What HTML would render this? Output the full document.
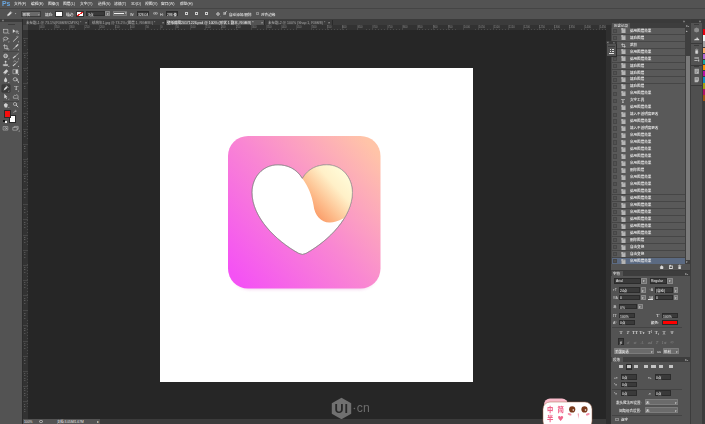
<!DOCTYPE html><html lang="zh"><head><meta charset="utf-8"><title>Photoshop</title><style>
*{margin:0;padding:0;box-sizing:border-box}
html,body{width:705px;height:424px;overflow:hidden;background:#262626}
body{position:relative;font-family:"Liberation Sans","Noto Sans CJK SC",sans-serif;color:#e6e6e6}
.a{position:absolute}
.t{position:absolute;white-space:nowrap;line-height:1;font-size:14.8px;color:#e8e8e8;transform:scale(.25);transform-origin:0 0;font-weight:500}
.f{position:absolute;background:#3a3a3a;border:0.5px solid #2c2c2c}
.dd{position:absolute;background:#606060;border:0.5px solid #3a3a3a}
</style></head><body>
<div class="a" style="left:28px;top:30px;width:578px;height:389px;background:#262626;"></div>
<div class="a" style="left:160px;top:68px;width:313px;height:313.5px;background:#ffffff;"></div>
<svg class="a" style="left:218px;top:126px" width="173" height="173" viewBox="218 126 173 173">
<defs>
<linearGradient id="g1" x1="0" y1="0.93" x2="1" y2="0.07"><stop offset="0.03" stop-color="#f452f4"/><stop offset="0.5" stop-color="#f987d2"/><stop offset="0.97" stop-color="#ffc4a8"/></linearGradient>
<linearGradient id="g2" x1="0.1" y1="0.9" x2="0.8" y2="0.2"><stop offset="0" stop-color="#f98a55"/><stop offset="0.35" stop-color="#fdbb8a"/><stop offset="0.72" stop-color="#fff0c8"/><stop offset="1" stop-color="#fffbd8"/></linearGradient>
<filter id="sh" x="-10%" y="-10%" width="120%" height="125%"><feGaussianBlur stdDeviation="1.6"/></filter>
<clipPath id="hc"><path id="hp" d="M302.4 178.4 C296.5 168.5 287 164.8 278 164.8 C262.5 164.8 252 177.5 252 192.5 C252 217 275.5 240.5 298.6 253.3 Q302.4 255.6 306.2 253.3 C329 240.5 352.4 217 352.4 192.5 C352.4 177.5 342 164.8 326.8 164.8 C317.5 164.8 308 168.5 302.4 178.4 Z"/></clipPath>
</defs>
<rect x="231" y="141" width="147" height="149" rx="19" fill="#e9a8dc" opacity="0.4" filter="url(#sh)"/>
<rect x="228" y="136" width="152.5" height="152.5" rx="20" fill="url(#g1)"/>
<path d="M302.4 178.4 C296.5 168.5 287 164.8 278 164.8 C262.5 164.8 252 177.5 252 192.5 C252 217 275.5 240.5 298.6 253.3 Q302.4 255.6 306.2 253.3 C329 240.5 352.4 217 352.4 192.5 C352.4 177.5 342 164.8 326.8 164.8 C317.5 164.8 308 168.5 302.4 178.4 Z" fill="#fff" stroke="#8c8488" stroke-width="0.6"/>
<g clip-path="url(#hc)"><path d="M302.4 178.6 C308 186 312 196 313.5 205 C314.5 216 322 223 330 222.5 C338 222 346 218 352 212 L356 160 L300 160 Z" fill="url(#g2)"/></g>
<path d="M302.4 178.4 C296.5 168.5 287 164.8 278 164.8 C262.5 164.8 252 177.5 252 192.5 C252 217 275.5 240.5 298.6 253.3 Q302.4 255.6 306.2 253.3 C329 240.5 352.4 217 352.4 192.5 C352.4 177.5 342 164.8 326.8 164.8 C317.5 164.8 308 168.5 302.4 178.4 Z" fill="none" stroke="#8c8488" stroke-width="0.6"/>
</svg>
<svg class="a" style="left:328px;top:395px;will-change:transform" width="48" height="26" viewBox="328 395 48 26">
<polygon points="341.5,397.8 351.2,403.2 351.2,413.8 341.5,419.2 331.8,413.8 331.8,403.2" fill="#707070"/>
<text x="341.6" y="412.5" font-size="12.6" font-weight="bold" text-anchor="middle" fill="#282828" font-family="Liberation Sans, sans-serif" letter-spacing="0.8">UI</text>
<circle cx="354.4" cy="408.5" r="0.8" fill="#6a6a6a"/>
<text x="356.8" y="411.9" font-size="12.2" fill="#6c6c6c" font-family="Liberation Sans, sans-serif" letter-spacing="0.2">cn</text>
</svg>
<div class="a" style="left:0px;top:0px;width:705px;height:8.3px;background:#535353;"></div>
<div class="t" style="left:2px;top:0.35px;font-size:27.2px;color:#6aa6de;font-weight:bold;letter-spacing:-0.2px">Ps</div>
<div class="t" style="left:14px;top:2.45px;font-size:15.0px;color:#e8e8e8;">文件(F)</div>
<div class="t" style="left:31px;top:2.45px;font-size:15.0px;color:#e8e8e8;">编辑(E)</div>
<div class="t" style="left:47.5px;top:2.45px;font-size:15.0px;color:#e8e8e8;">图像(I)</div>
<div class="t" style="left:63px;top:2.45px;font-size:15.0px;color:#e8e8e8;">图层(L)</div>
<div class="t" style="left:80px;top:2.45px;font-size:15.0px;color:#e8e8e8;">文字(Y)</div>
<div class="t" style="left:97.5px;top:2.45px;font-size:15.0px;color:#e8e8e8;">选择(S)</div>
<div class="t" style="left:113.6px;top:2.45px;font-size:15.0px;color:#e8e8e8;">滤镜(T)</div>
<div class="t" style="left:130.7px;top:2.45px;font-size:15.0px;color:#e8e8e8;">3D(D)</div>
<div class="t" style="left:144.5px;top:2.45px;font-size:15.0px;color:#e8e8e8;">视图(V)</div>
<div class="t" style="left:161px;top:2.45px;font-size:15.0px;color:#e8e8e8;">窗口(W)</div>
<div class="t" style="left:180px;top:2.45px;font-size:15.0px;color:#e8e8e8;">帮助(H)</div>
<div class="a" style="left:0px;top:8.1px;width:705px;height:11.2px;background:#535353;border-top:0.5px solid #454545"></div>
<svg class="a" style="left:6px;top:10px" width="12" height="8" viewBox="0 0 12 8"><path d="M1.2 6.2 L1.8 4.2 L4.2 1.8 L5.6 3.2 L3.2 5.6 Z" fill="#d8d8d8"/><path d="M4.6 1.4 L6 2.8" stroke="#d8d8d8" stroke-width="0.7"/><path d="M8.9 3.2 L10.3 3.2 L9.6 4.2 Z" fill="#d0d0d0"/></svg>
<div class="a" style="left:20.9px;top:10.9px;width:20px;height:5.8px;background:#6a6a6a;border:0.4px solid #3c3c3c;border-radius:0.5px"></div>
<div class="t" style="left:23px;top:12.55px;font-size:14.4px;color:#e8e8e8;">形状</div>
<div class="t" style="left:38px;top:12.75px;font-size:12px;color:#ddd;">÷</div>
<div class="t" style="left:45px;top:12.55px;font-size:14.4px;color:#e8e8e8;">填充:</div>
<div class="a" style="left:55px;top:11px;width:8px;height:5.6px;background:#ffffff;border:0.5px solid #333"></div>
<div class="t" style="left:66px;top:12.55px;font-size:14.4px;color:#e8e8e8;">描边:</div>
<div class="a" style="left:76px;top:11px;width:8px;height:5.6px;background:#ffffff;border:0.5px solid #333;background:linear-gradient(to bottom right,#fff 42%,#e22 42%,#e22 58%,#fff 58%)"></div>
<div class="a" style="left:86.2px;top:10.8px;width:19px;height:5.4px;background:#3a3a3a;border:0.4px solid #2c2c2c"></div>
<div class="t" style="left:88px;top:12.55px;font-size:14.4px;color:#e8e8e8;">3点</div>
<div class="a" style="left:105.4px;top:10.8px;width:4.7px;height:5.4px;background:#6e6e6e;border:0.4px solid #8a8a8a;border-radius:0.5px"></div>
<div class="t" style="left:106.7px;top:12.05px;font-size:12px;color:#e8e8e8;">▾</div>
<div class="a" style="left:112.8px;top:10.8px;width:14px;height:5.4px;background:#626262;border:0.4px solid #7a7a7a;border-radius:0.5px"></div>
<div class="a" style="left:114.4px;top:13px;width:10px;height:0.9px;background:#f0f0f0;"></div>
<div class="t" style="left:124.8px;top:12.25px;font-size:10.4px;color:#ddd;">▾</div>
<div class="t" style="left:130.4px;top:12.55px;font-size:14.4px;color:#e8e8e8;">W:</div>
<div class="a" style="left:137px;top:10.9px;width:12.2px;height:5.2px;background:#3a3a3a;border:0.4px solid #2c2c2c"></div>
<div class="t" style="left:138px;top:12.55px;font-size:13.6px;color:#f4f4f4;">326.04</div>
<svg class="a" style="left:152.6px;top:12.4px" width="5" height="3" viewBox="0 0 5 3" fill="none" stroke="#c8c8c8" stroke-width="0.6"><rect x="0.3" y="0.6" width="2.4" height="1.6" rx="0.8"/><rect x="2.2" y="0.6" width="2.4" height="1.6" rx="0.8"/></svg>
<div class="t" style="left:160.3px;top:12.55px;font-size:14.4px;color:#e8e8e8;">H:</div>
<div class="a" style="left:165.5px;top:10.9px;width:12.2px;height:5.2px;background:#3a3a3a;border:0.4px solid #2c2c2c"></div>
<div class="t" style="left:166.5px;top:12.55px;font-size:13.6px;color:#f4f4f4;">286 像</div>
<div class="a" style="left:185px;top:11.6px;width:3px;height:3.6px;background:transparent;border:0.6px solid #ccc"></div>
<div class="a" style="left:195px;top:11.6px;width:3px;height:3.6px;background:transparent;border:0.6px solid #ccc"></div>
<div class="a" style="left:205px;top:11.6px;width:3px;height:3.6px;background:transparent;border:0.6px solid #ccc"></div>
<svg class="a" style="left:214.5px;top:11px" width="6" height="6" viewBox="0 0 6 6"><circle cx="3" cy="3" r="1.25" fill="none" stroke="#ddd" stroke-width="0.9"/><path d="M5 5 l0.9 0 l-0.45 0.6z" fill="#ccc"/></svg>
<div class="a" style="left:223.3px;top:12px;width:3.2px;height:3.2px;background:#5e5e5e;border:0.4px solid #8a8a8a"></div>
<div class="t" style="left:223.7px;top:11.15px;font-size:16px;color:#f4f4f4;">✓</div>
<div class="t" style="left:229px;top:12.55px;font-size:14.4px;color:#e8e8e8;">自动添加/删除</div>
<div class="a" style="left:255.6px;top:12px;width:3.2px;height:3.2px;background:#5e5e5e;border:0.4px solid #8a8a8a"></div>
<div class="t" style="left:261px;top:12.55px;font-size:14.4px;color:#e8e8e8;">对齐边缘</div>
<div class="a" style="left:0px;top:19.3px;width:611px;height:5.7px;background:#3b3b3b;"></div>
<div class="a" style="left:165.3px;top:19.6px;width:98.7px;height:5.4px;background:#535353;"></div>
<div class="t" style="left:26px;top:21.05px;font-size:14.0px;color:#aaa;">未标题-1 @ 73.1%(RGB/8/CMYK) *</div>
<div class="t" style="left:92px;top:21.05px;font-size:14.0px;color:#aaa;">结构年1.jpg @ 73.2% (图层 1, RGB/8#) *</div>
<div class="t" style="left:167px;top:21.05px;font-size:14.0px;color:#eee;">壁纸截图20171226.psd @ 100% (形状 1 副本, RGB/8) *</div>
<div class="t" style="left:268px;top:21.05px;font-size:14.0px;color:#aaa;">未标题-2 @ 100% (Shap 1, RGB/8) *</div>
<div class="t" style="left:85px;top:20.85px;font-size:15.2px;color:#ccc;">×</div>
<div class="t" style="left:161.5px;top:20.85px;font-size:15.2px;color:#ccc;">×</div>
<div class="t" style="left:260.5px;top:20.85px;font-size:15.2px;color:#ccc;">×</div>
<div class="t" style="left:328px;top:20.85px;font-size:15.2px;color:#ccc;">×</div>
<div class="a" style="left:87.7px;top:19.6px;width:0.5px;height:5.4px;background:#2a2a2a;"></div>
<div class="a" style="left:165px;top:19.6px;width:0.5px;height:5.4px;background:#2a2a2a;"></div>
<div class="a" style="left:264px;top:19.6px;width:0.5px;height:5.4px;background:#2a2a2a;"></div>
<div class="a" style="left:332px;top:19.6px;width:0.5px;height:5.4px;background:#2a2a2a;"></div>
<div class="a" style="left:23px;top:25px;width:583px;height:5.2px;background:#323232;background-image:repeating-linear-gradient(to right,#4a4a4a 0,#4a4a4a 0.35px,transparent 0.35px,transparent 1.514px);background-size:100% 1.2px;background-repeat:no-repeat;background-position:0.9px 4px"></div>
<div class="a" style="left:23px;top:30.2px;width:4.8px;height:389px;background:#323232;background-image:repeating-linear-gradient(to bottom,#4a4a4a 0,#4a4a4a 0.35px,transparent 0.35px,transparent 1.514px);background-size:1.2px 100%;background-repeat:no-repeat;background-position:3.6px 1.3px"></div>
<div class="a" style="left:23px;top:25px;width:4.8px;height:5.2px;background:#474747;"></div>
<div class="a" style="left:38.88px;top:25.3px;width:0.4px;height:4.9px;background:#464646;"></div>
<div class="t" style="left:39.58px;top:25.75px;font-size:10.8px;color:#8c8c8c;">400</div>
<div class="a" style="left:54.02px;top:25.3px;width:0.4px;height:4.9px;background:#464646;"></div>
<div class="t" style="left:54.72px;top:25.75px;font-size:10.8px;color:#8c8c8c;">350</div>
<div class="a" style="left:69.16px;top:25.3px;width:0.4px;height:4.9px;background:#464646;"></div>
<div class="t" style="left:69.86px;top:25.75px;font-size:10.8px;color:#8c8c8c;">300</div>
<div class="a" style="left:84.3px;top:25.3px;width:0.4px;height:4.9px;background:#464646;"></div>
<div class="t" style="left:85.0px;top:25.75px;font-size:10.8px;color:#8c8c8c;">250</div>
<div class="a" style="left:99.44px;top:25.3px;width:0.4px;height:4.9px;background:#464646;"></div>
<div class="t" style="left:100.14px;top:25.75px;font-size:10.8px;color:#8c8c8c;">200</div>
<div class="a" style="left:114.58px;top:25.3px;width:0.4px;height:4.9px;background:#464646;"></div>
<div class="t" style="left:115.28px;top:25.75px;font-size:10.8px;color:#8c8c8c;">150</div>
<div class="a" style="left:129.72px;top:25.3px;width:0.4px;height:4.9px;background:#464646;"></div>
<div class="t" style="left:130.42px;top:25.75px;font-size:10.8px;color:#8c8c8c;">100</div>
<div class="a" style="left:144.86px;top:25.3px;width:0.4px;height:4.9px;background:#464646;"></div>
<div class="t" style="left:145.56px;top:25.75px;font-size:10.8px;color:#8c8c8c;">50</div>
<div class="a" style="left:160.0px;top:25.3px;width:0.4px;height:4.9px;background:#464646;"></div>
<div class="t" style="left:160.7px;top:25.75px;font-size:10.8px;color:#8c8c8c;">0</div>
<div class="a" style="left:175.14px;top:25.3px;width:0.4px;height:4.9px;background:#464646;"></div>
<div class="t" style="left:175.84px;top:25.75px;font-size:10.8px;color:#8c8c8c;">50</div>
<div class="a" style="left:190.28px;top:25.3px;width:0.4px;height:4.9px;background:#464646;"></div>
<div class="t" style="left:190.98px;top:25.75px;font-size:10.8px;color:#8c8c8c;">100</div>
<div class="a" style="left:205.42px;top:25.3px;width:0.4px;height:4.9px;background:#464646;"></div>
<div class="t" style="left:206.12px;top:25.75px;font-size:10.8px;color:#8c8c8c;">150</div>
<div class="a" style="left:220.56px;top:25.3px;width:0.4px;height:4.9px;background:#464646;"></div>
<div class="t" style="left:221.26px;top:25.75px;font-size:10.8px;color:#8c8c8c;">200</div>
<div class="a" style="left:235.7px;top:25.3px;width:0.4px;height:4.9px;background:#464646;"></div>
<div class="t" style="left:236.4px;top:25.75px;font-size:10.8px;color:#8c8c8c;">250</div>
<div class="a" style="left:250.84px;top:25.3px;width:0.4px;height:4.9px;background:#464646;"></div>
<div class="t" style="left:251.54px;top:25.75px;font-size:10.8px;color:#8c8c8c;">300</div>
<div class="a" style="left:265.98px;top:25.3px;width:0.4px;height:4.9px;background:#464646;"></div>
<div class="t" style="left:266.68px;top:25.75px;font-size:10.8px;color:#8c8c8c;">350</div>
<div class="a" style="left:281.12px;top:25.3px;width:0.4px;height:4.9px;background:#464646;"></div>
<div class="t" style="left:281.82px;top:25.75px;font-size:10.8px;color:#8c8c8c;">400</div>
<div class="a" style="left:296.26px;top:25.3px;width:0.4px;height:4.9px;background:#464646;"></div>
<div class="t" style="left:296.96px;top:25.75px;font-size:10.8px;color:#8c8c8c;">450</div>
<div class="a" style="left:311.4px;top:25.3px;width:0.4px;height:4.9px;background:#464646;"></div>
<div class="t" style="left:312.1px;top:25.75px;font-size:10.8px;color:#8c8c8c;">500</div>
<div class="a" style="left:326.54px;top:25.3px;width:0.4px;height:4.9px;background:#464646;"></div>
<div class="t" style="left:327.24px;top:25.75px;font-size:10.8px;color:#8c8c8c;">550</div>
<div class="a" style="left:341.68px;top:25.3px;width:0.4px;height:4.9px;background:#464646;"></div>
<div class="t" style="left:342.38px;top:25.75px;font-size:10.8px;color:#8c8c8c;">600</div>
<div class="a" style="left:356.82px;top:25.3px;width:0.4px;height:4.9px;background:#464646;"></div>
<div class="t" style="left:357.52px;top:25.75px;font-size:10.8px;color:#8c8c8c;">650</div>
<div class="a" style="left:371.96px;top:25.3px;width:0.4px;height:4.9px;background:#464646;"></div>
<div class="t" style="left:372.66px;top:25.75px;font-size:10.8px;color:#8c8c8c;">700</div>
<div class="a" style="left:387.1px;top:25.3px;width:0.4px;height:4.9px;background:#464646;"></div>
<div class="t" style="left:387.8px;top:25.75px;font-size:10.8px;color:#8c8c8c;">750</div>
<div class="a" style="left:402.24px;top:25.3px;width:0.4px;height:4.9px;background:#464646;"></div>
<div class="t" style="left:402.94px;top:25.75px;font-size:10.8px;color:#8c8c8c;">800</div>
<div class="a" style="left:417.38px;top:25.3px;width:0.4px;height:4.9px;background:#464646;"></div>
<div class="t" style="left:418.08px;top:25.75px;font-size:10.8px;color:#8c8c8c;">850</div>
<div class="a" style="left:432.52px;top:25.3px;width:0.4px;height:4.9px;background:#464646;"></div>
<div class="t" style="left:433.22px;top:25.75px;font-size:10.8px;color:#8c8c8c;">900</div>
<div class="a" style="left:447.66px;top:25.3px;width:0.4px;height:4.9px;background:#464646;"></div>
<div class="t" style="left:448.36px;top:25.75px;font-size:10.8px;color:#8c8c8c;">950</div>
<div class="a" style="left:462.8px;top:25.3px;width:0.4px;height:4.9px;background:#464646;"></div>
<div class="t" style="left:463.5px;top:25.75px;font-size:10.8px;color:#8c8c8c;">1000</div>
<div class="a" style="left:477.94px;top:25.3px;width:0.4px;height:4.9px;background:#464646;"></div>
<div class="t" style="left:478.64px;top:25.75px;font-size:10.8px;color:#8c8c8c;">1050</div>
<div class="a" style="left:493.08px;top:25.3px;width:0.4px;height:4.9px;background:#464646;"></div>
<div class="t" style="left:493.78px;top:25.75px;font-size:10.8px;color:#8c8c8c;">1100</div>
<div class="a" style="left:508.22px;top:25.3px;width:0.4px;height:4.9px;background:#464646;"></div>
<div class="t" style="left:508.92px;top:25.75px;font-size:10.8px;color:#8c8c8c;">1150</div>
<div class="a" style="left:523.36px;top:25.3px;width:0.4px;height:4.9px;background:#464646;"></div>
<div class="t" style="left:524.06px;top:25.75px;font-size:10.8px;color:#8c8c8c;">1200</div>
<div class="a" style="left:538.5px;top:25.3px;width:0.4px;height:4.9px;background:#464646;"></div>
<div class="t" style="left:539.2px;top:25.75px;font-size:10.8px;color:#8c8c8c;">1250</div>
<div class="a" style="left:553.64px;top:25.3px;width:0.4px;height:4.9px;background:#464646;"></div>
<div class="t" style="left:554.34px;top:25.75px;font-size:10.8px;color:#8c8c8c;">1300</div>
<div class="a" style="left:568.78px;top:25.3px;width:0.4px;height:4.9px;background:#464646;"></div>
<div class="t" style="left:569.48px;top:25.75px;font-size:10.8px;color:#8c8c8c;">1350</div>
<div class="a" style="left:583.92px;top:25.3px;width:0.4px;height:4.9px;background:#464646;"></div>
<div class="t" style="left:584.62px;top:25.75px;font-size:10.8px;color:#8c8c8c;">1400</div>
<div class="a" style="left:599.06px;top:25.3px;width:0.4px;height:4.9px;background:#464646;"></div>
<div class="t" style="left:599.76px;top:25.75px;font-size:10.8px;color:#8c8c8c;">1450</div>
<div class="a" style="left:23.3px;top:37.72px;width:4.5px;height:0.4px;background:#464646;"></div>
<div class="t" style="left:23.7px;top:39.17px;font-size:10.0px;color:#8c8c8c;line-height:0.92;white-space:normal;width:8px">1<br>0<br>0</div>
<div class="a" style="left:23.3px;top:52.86px;width:4.5px;height:0.4px;background:#464646;"></div>
<div class="t" style="left:23.7px;top:54.31px;font-size:10.0px;color:#8c8c8c;line-height:0.92;white-space:normal;width:8px">5<br>0</div>
<div class="a" style="left:23.3px;top:68.0px;width:4.5px;height:0.4px;background:#464646;"></div>
<div class="t" style="left:23.7px;top:69.45px;font-size:10.0px;color:#8c8c8c;line-height:0.92;white-space:normal;width:8px">0</div>
<div class="a" style="left:23.3px;top:83.14px;width:4.5px;height:0.4px;background:#464646;"></div>
<div class="t" style="left:23.7px;top:84.59px;font-size:10.0px;color:#8c8c8c;line-height:0.92;white-space:normal;width:8px">5<br>0</div>
<div class="a" style="left:23.3px;top:98.28px;width:4.5px;height:0.4px;background:#464646;"></div>
<div class="t" style="left:23.7px;top:99.73px;font-size:10.0px;color:#8c8c8c;line-height:0.92;white-space:normal;width:8px">1<br>0<br>0</div>
<div class="a" style="left:23.3px;top:113.42px;width:4.5px;height:0.4px;background:#464646;"></div>
<div class="t" style="left:23.7px;top:114.87px;font-size:10.0px;color:#8c8c8c;line-height:0.92;white-space:normal;width:8px">1<br>5<br>0</div>
<div class="a" style="left:23.3px;top:128.56px;width:4.5px;height:0.4px;background:#464646;"></div>
<div class="t" style="left:23.7px;top:130.01px;font-size:10.0px;color:#8c8c8c;line-height:0.92;white-space:normal;width:8px">2<br>0<br>0</div>
<div class="a" style="left:23.3px;top:143.7px;width:4.5px;height:0.4px;background:#464646;"></div>
<div class="t" style="left:23.7px;top:145.15px;font-size:10.0px;color:#8c8c8c;line-height:0.92;white-space:normal;width:8px">2<br>5<br>0</div>
<div class="a" style="left:23.3px;top:158.84px;width:4.5px;height:0.4px;background:#464646;"></div>
<div class="t" style="left:23.7px;top:160.29px;font-size:10.0px;color:#8c8c8c;line-height:0.92;white-space:normal;width:8px">3<br>0<br>0</div>
<div class="a" style="left:23.3px;top:173.98px;width:4.5px;height:0.4px;background:#464646;"></div>
<div class="t" style="left:23.7px;top:175.43px;font-size:10.0px;color:#8c8c8c;line-height:0.92;white-space:normal;width:8px">3<br>5<br>0</div>
<div class="a" style="left:23.3px;top:189.12px;width:4.5px;height:0.4px;background:#464646;"></div>
<div class="t" style="left:23.7px;top:190.57px;font-size:10.0px;color:#8c8c8c;line-height:0.92;white-space:normal;width:8px">4<br>0<br>0</div>
<div class="a" style="left:23.3px;top:204.26px;width:4.5px;height:0.4px;background:#464646;"></div>
<div class="t" style="left:23.7px;top:205.71px;font-size:10.0px;color:#8c8c8c;line-height:0.92;white-space:normal;width:8px">4<br>5<br>0</div>
<div class="a" style="left:23.3px;top:219.4px;width:4.5px;height:0.4px;background:#464646;"></div>
<div class="t" style="left:23.7px;top:220.85px;font-size:10.0px;color:#8c8c8c;line-height:0.92;white-space:normal;width:8px">5<br>0<br>0</div>
<div class="a" style="left:23.3px;top:234.54px;width:4.5px;height:0.4px;background:#464646;"></div>
<div class="t" style="left:23.7px;top:235.99px;font-size:10.0px;color:#8c8c8c;line-height:0.92;white-space:normal;width:8px">5<br>5<br>0</div>
<div class="a" style="left:23.3px;top:249.68px;width:4.5px;height:0.4px;background:#464646;"></div>
<div class="t" style="left:23.7px;top:251.13px;font-size:10.0px;color:#8c8c8c;line-height:0.92;white-space:normal;width:8px">6<br>0<br>0</div>
<div class="a" style="left:23.3px;top:264.82px;width:4.5px;height:0.4px;background:#464646;"></div>
<div class="t" style="left:23.7px;top:266.27px;font-size:10.0px;color:#8c8c8c;line-height:0.92;white-space:normal;width:8px">6<br>5<br>0</div>
<div class="a" style="left:23.3px;top:279.96px;width:4.5px;height:0.4px;background:#464646;"></div>
<div class="t" style="left:23.7px;top:281.41px;font-size:10.0px;color:#8c8c8c;line-height:0.92;white-space:normal;width:8px">7<br>0<br>0</div>
<div class="a" style="left:23.3px;top:295.1px;width:4.5px;height:0.4px;background:#464646;"></div>
<div class="t" style="left:23.7px;top:296.55px;font-size:10.0px;color:#8c8c8c;line-height:0.92;white-space:normal;width:8px">7<br>5<br>0</div>
<div class="a" style="left:23.3px;top:310.24px;width:4.5px;height:0.4px;background:#464646;"></div>
<div class="t" style="left:23.7px;top:311.69px;font-size:10.0px;color:#8c8c8c;line-height:0.92;white-space:normal;width:8px">8<br>0<br>0</div>
<div class="a" style="left:23.3px;top:325.38px;width:4.5px;height:0.4px;background:#464646;"></div>
<div class="t" style="left:23.7px;top:326.83px;font-size:10.0px;color:#8c8c8c;line-height:0.92;white-space:normal;width:8px">8<br>5<br>0</div>
<div class="a" style="left:23.3px;top:340.52px;width:4.5px;height:0.4px;background:#464646;"></div>
<div class="t" style="left:23.7px;top:341.97px;font-size:10.0px;color:#8c8c8c;line-height:0.92;white-space:normal;width:8px">9<br>0<br>0</div>
<div class="a" style="left:23.3px;top:355.66px;width:4.5px;height:0.4px;background:#464646;"></div>
<div class="t" style="left:23.7px;top:357.11px;font-size:10.0px;color:#8c8c8c;line-height:0.92;white-space:normal;width:8px">9<br>5<br>0</div>
<div class="a" style="left:23.3px;top:370.8px;width:4.5px;height:0.4px;background:#464646;"></div>
<div class="t" style="left:23.7px;top:372.25px;font-size:10.0px;color:#8c8c8c;line-height:0.92;white-space:normal;width:8px">1<br>0<br>0<br>0</div>
<div class="a" style="left:23.3px;top:385.94px;width:4.5px;height:0.4px;background:#464646;"></div>
<div class="t" style="left:23.7px;top:387.39px;font-size:10.0px;color:#8c8c8c;line-height:0.92;white-space:normal;width:8px">1<br>0<br>5<br>0</div>
<div class="a" style="left:23.3px;top:401.08px;width:4.5px;height:0.4px;background:#464646;"></div>
<div class="t" style="left:23.7px;top:402.53px;font-size:10.0px;color:#8c8c8c;line-height:0.92;white-space:normal;width:8px">1<br>1<br>0<br>0</div>
<div class="a" style="left:0px;top:19.3px;width:22px;height:405px;background:#535353;"></div>
<div class="a" style="left:0px;top:19.3px;width:22px;height:2.3px;background:#3c3c3c;"></div>
<div class="t" style="left:1.6px;top:19.25px;font-size:13.6px;color:#ccc;">«</div>
<div class="a" style="left:22px;top:19.3px;width:1.2px;height:405px;background:#2b2b2b;"></div>
<div class="a" style="left:7.5px;top:24.2px;width:7px;height:0.6px;background:#3c3c3c;"></div>
<div class="a" style="left:1.7px;top:84.6px;width:7.9px;height:7.1px;background:#3b3b3b;border-radius:0.8px;box-shadow:0 0 0 0.4px #303030"></div>
<div class="a" style="left:3px;top:51.4px;width:16px;height:0.5px;background:#454545;"></div>
<div class="a" style="left:3px;top:100.7px;width:16px;height:0.5px;background:#454545;"></div>
<svg class="a" style="left:0;top:19px" width="22" height="120" viewBox="0 19 22 120" fill="none" stroke="#cdcdcd" stroke-width="0.62" stroke-linecap="round" stroke-linejoin="round">
<g fill="#cfcfcf" stroke="none">
<path d="M9.2 32.9 v1.2 h-1.2 Z"/><path d="M19.0 32.9 v1.2 h-1.2 Z"/><path d="M9.2 41.1 v1.2 h-1.2 Z"/><path d="M19.0 41.1 v1.2 h-1.2 Z"/><path d="M9.2 49.1 v1.2 h-1.2 Z"/><path d="M19.0 49.1 v1.2 h-1.2 Z"/><path d="M9.2 58.0 v1.2 h-1.2 Z"/><path d="M19.0 58.0 v1.2 h-1.2 Z"/><path d="M9.2 65.7 v1.2 h-1.2 Z"/><path d="M19.0 65.7 v1.2 h-1.2 Z"/><path d="M9.2 73.8 v1.2 h-1.2 Z"/><path d="M19.0 73.8 v1.2 h-1.2 Z"/><path d="M9.2 81.8 v1.2 h-1.2 Z"/><path d="M19.0 81.8 v1.2 h-1.2 Z"/><path d="M9.2 90.2 v1.2 h-1.2 Z"/><path d="M19.0 90.2 v1.2 h-1.2 Z"/><path d="M9.2 98.4 v1.2 h-1.2 Z"/><path d="M19.0 98.4 v1.2 h-1.2 Z"/><path d="M9.2 106.9 v1.2 h-1.2 Z"/><path d="M19.6 130.2 v1.2 h-1.2 Z"/>
</g>
<rect x="3.6" y="29.4" width="4.2" height="3.6" stroke-dasharray="0.9 0.6" stroke-width="0.6"/>
<path d="M12.8 29.2 L12.8 33 L15.4 31.1 Z" fill="#d6d6d6" stroke="none"/><path d="M15.6 31.8 H18.4 M17 30.4 V33.2" stroke-width="0.6"/>
<ellipse cx="5.6" cy="38.6" rx="2.3" ry="1.5"/><path d="M4 39.8 L3.6 41.2"/>
<path d="M13.4 41.3 L17.6 37.2" stroke-width="0.9"/><path d="M17.9 36.2 L18.3 36.9 M16.6 36.6 L17 36.2" stroke-width="0.4"/>
<path d="M4.6 44.6 V48.6 H8.2 M3.5 45.7 H7.1 V49.6" stroke-width="0.65"/>
<path d="M13.5 49 L16.3 46.2" stroke-width="0.8"/><path d="M16.2 46.3 L17.8 44.7" stroke-width="1.3"/>
<circle cx="5.6" cy="55.9" r="2" fill="#bdbdbd" stroke="#d6d6d6" stroke-width="0.5"/><path d="M4.4 55.9 H6.8 M5.6 54.7 V57.1" stroke="#555" stroke-width="0.5"/>
<path d="M13.3 57.9 L15.2 56.3" stroke-width="1.2"/><path d="M15.2 56.3 L18.2 53.6" stroke-width="0.6"/>
<path d="M5.6 61.3 V64 M3.6 65.7 H7.6 V64.4 H3.6 Z" fill="#d0d0d0" stroke-width="0.5"/><circle cx="5.6" cy="61.7" r="0.9" fill="#d6d6d6" stroke="none"/>
<path d="M13.3 65.6 L15 64.1" stroke-width="1.2"/><path d="M15 64.1 L18 61.4" stroke-width="0.6"/><path d="M13.6 61.6 A1.6 1.6 0 0 1 16 61.3" stroke-width="0.5"/>
<path d="M3.5 72.6 L6.3 69.6 L8.1 71 L5.4 74 Z" fill="#d0d0d0" stroke-width="0.4"/>
<rect x="13.3" y="69.6" width="4.6" height="4.1" stroke-width="0.5"/><rect x="15.6" y="69.8" width="2.2" height="3.7" fill="#d6d6d6" stroke="none"/>
<path d="M5.6 77.3 C4.6 78.9 4 79.8 4 80.6 A1.6 1.6 0 0 0 7.2 80.6 C7.2 79.8 6.6 78.9 5.6 77.3 Z" fill="#d0d0d0" stroke="none"/>
<ellipse cx="15.2" cy="79.3" rx="2" ry="1.6" stroke-width="0.7"/><path d="M16.6 80.4 L18.3 81.3" stroke-width="0.9"/>
<path d="M3.6 90.4 L4.4 88.4 L6.3 86.3 L7.6 87.6 L5.6 89.6 Z" fill="#dcdcdc" stroke="none"/><path d="M6.7 85.9 L8 87.2" stroke-width="0.7"/>
<path d="M4 101.1 L4 97.6" stroke="none"/>
<path d="M4.3 93.8 L4.3 98.6 L5.4 97.5 L6.3 99.3 L6.9 99 L6.1 97.3 L7.5 97.2 Z" fill="#d6d6d6" stroke="none"/>
<path d="M13.4 98.3 H18 V95.8 C17.4 94.4 15.9 94.6 15.7 95.6 C14.6 94.9 13.4 95.6 13.4 96.8 Z" stroke-width="0.5" stroke-dasharray="0.8 0.5"/>
<path d="M3.9 105.3 C3.9 103.4 4.6 103.2 4.9 104.3 C5 102.6 5.9 102.6 6 104.1 C6.3 102.9 7.1 103.1 7 104.4 C7.5 103.7 8 104.1 7.7 105.1 L7.1 107.4 H4.8 Z" fill="#d0d0d0" stroke="none"/>
<circle cx="15" cy="104" r="1.6" stroke-width="0.6"/><path d="M16.2 105.2 L17.9 106.9" stroke-width="0.9"/>
<path d="M13.6 112.6 A2 2 0 0 1 16 111 M15.4 110.2 L16.3 111.1 L15.2 111.7" stroke-width="0.45"/>
<rect x="3.5" y="126.6" width="4.3" height="3.5" stroke-width="0.5"/><circle cx="5.65" cy="128.35" r="0.9" stroke-width="0.45"/>
<rect x="13.2" y="127.4" width="4" height="2.8" stroke-width="0.5"/><path d="M14.2 127.4 V126.4 H18.2 V129.2 H17.2" stroke-width="0.5"/>
</svg>
<div class="t" style="left:13.5px;top:84.15px;font-size:28px;color:#dcdcdc;font-family:Liberation Serif,serif;font-weight:400">T</div>
<div class="a" style="left:8.7px;top:115.2px;width:7.5px;height:7.7px;background:#ffffff;border:0.35px solid #2a2a2a"></div>
<div class="a" style="left:4.1px;top:110.4px;width:7.4px;height:7.4px;background:#f50d0d;border:0.35px solid #2a2a2a"></div>
<div class="a" style="left:3.4px;top:119.8px;width:2px;height:1.9px;background:#151515;"></div>
<div class="a" style="left:4.5px;top:120.8px;width:2px;height:1.9px;background:#f4f4f4;"></div>
<div class="a" style="left:22.6px;top:419.2px;width:583.4px;height:4.8px;background:#3b3b3b;"></div>
<div class="a" style="left:22.6px;top:419.2px;width:77.8px;height:4.8px;background:#535353;"></div>
<div class="t" style="left:23.8px;top:420.05px;font-size:13.2px;color:#e8e8e8;">100%</div>
<div class="a" style="left:39.4px;top:420px;width:3.2px;height:3.2px;background:transparent;border:0.5px solid #bbb;border-radius:50%"></div>
<div class="t" style="left:57px;top:420.05px;font-size:13.2px;color:#e8e8e8;">文档:3.05M/1.67M</div>
<div class="t" style="left:96.8px;top:419.75px;font-size:14.4px;color:#ddd;">▸</div>
<div class="a" style="left:606px;top:25px;width:5px;height:399px;background:#2f2f2f;"></div>
<div class="a" style="left:611px;top:19.3px;width:94px;height:404.7px;background:#535353;"></div>
<div class="a" style="left:611px;top:19.3px;width:94px;height:3.6px;background:#3a3a3a;"></div>
<div class="t" style="left:682.5px;top:19.75px;font-size:13.6px;color:#ccc;">»</div>
<div class="t" style="left:698.5px;top:19.75px;font-size:13.6px;color:#ccc;">»</div>
<div class="a" style="left:690px;top:19.3px;width:1px;height:404.7px;background:#3c3c3c;"></div>
<div class="a" style="left:611.3px;top:23px;width:78.7px;height:4.6px;background:#3d3d3d;"></div>
<div class="a" style="left:611.8px;top:23.2px;width:18.7px;height:4.4px;background:#535353;"></div>
<div class="t" style="left:613.5px;top:24.25px;font-size:14.0px;color:#e0e0e0;">历史记录</div>
<div class="t" style="left:685.5px;top:24.25px;font-size:12px;color:#ccc;">▾≡</div>
<div class="a" style="left:611.3px;top:27.6px;width:74.1px;height:236.3px;background:#464646;"></div>
<div class="a" style="left:611.5px;top:27.7px;width:73.9px;height:6.35px;background:#595959;"></div>
<div class="a" style="left:612.6px;top:28.8px;width:4.2px;height:4.2px;background:#525252;border:0.45px solid #474747"></div>
<svg class="a" style="left:620.8px;top:28.3px" width="5" height="5.4" viewBox="0 0 5 5.4"><path d="M0.3 0.4 H4.7 V5 H0.3 Z" fill="#8f8f8f"/><path d="M0.3 0.4 H2.2 V1.5 H0.3 Z" fill="#d8d8d8"/><path d="M2.6 1.2 H4.3 M0.8 2.4 H4.3 M0.8 3.4 H4.3 M0.8 4.4 H4.3" stroke="#e0e0e0" stroke-width="0.5"/></svg>
<div class="t" style="left:629.7px;top:28.65px;font-size:14.2px;color:#f2f2f2;">停用图层效果</div>
<div class="a" style="left:611.5px;top:34.68px;width:73.9px;height:6.35px;background:#595959;"></div>
<div class="a" style="left:612.6px;top:35.78px;width:4.2px;height:4.2px;background:#525252;border:0.45px solid #474747"></div>
<svg class="a" style="left:620.8px;top:35.28px" width="5" height="5.4" viewBox="0 0 5 5.4"><path d="M0.3 0.4 H4.7 V5 H0.3 Z" fill="#8f8f8f"/><path d="M0.3 0.4 H2.2 V1.5 H0.3 Z" fill="#d8d8d8"/><path d="M2.6 1.2 H4.3 M0.8 2.4 H4.3 M0.8 3.4 H4.3 M0.8 4.4 H4.3" stroke="#e0e0e0" stroke-width="0.5"/></svg>
<div class="t" style="left:629.7px;top:35.63px;font-size:14.2px;color:#f2f2f2;">填充图层</div>
<div class="a" style="left:611.5px;top:41.65px;width:73.9px;height:6.35px;background:#595959;"></div>
<div class="a" style="left:612.6px;top:42.75px;width:4.2px;height:4.2px;background:#525252;border:0.45px solid #474747"></div>
<svg class="a" style="left:620.8px;top:42.55px" width="5" height="5" viewBox="0 0 5 5" fill="none" stroke="#dcdcdc" stroke-width="0.6"><path d="M1.3 0.3 V3.6 H4.7 M0.2 1.4 H3.6 V4.7"/></svg>
<div class="t" style="left:629.7px;top:42.6px;font-size:14.2px;color:#f2f2f2;">裁剪</div>
<div class="a" style="left:611.5px;top:48.63px;width:73.9px;height:6.35px;background:#595959;"></div>
<div class="a" style="left:612.6px;top:49.73px;width:4.2px;height:4.2px;background:#525252;border:0.45px solid #474747"></div>
<svg class="a" style="left:620.8px;top:49.23px" width="5" height="5.4" viewBox="0 0 5 5.4"><path d="M0.3 0.4 H4.7 V5 H0.3 Z" fill="#8f8f8f"/><path d="M0.3 0.4 H2.2 V1.5 H0.3 Z" fill="#d8d8d8"/><path d="M2.6 1.2 H4.3 M0.8 2.4 H4.3 M0.8 3.4 H4.3 M0.8 4.4 H4.3" stroke="#e0e0e0" stroke-width="0.5"/></svg>
<div class="t" style="left:629.7px;top:49.58px;font-size:14.2px;color:#f2f2f2;">启用图层效果</div>
<div class="a" style="left:611.5px;top:55.6px;width:73.9px;height:6.35px;background:#595959;"></div>
<div class="a" style="left:612.6px;top:56.7px;width:4.2px;height:4.2px;background:#525252;border:0.45px solid #474747"></div>
<svg class="a" style="left:620.8px;top:56.2px" width="5" height="5.4" viewBox="0 0 5 5.4"><path d="M0.3 0.4 H4.7 V5 H0.3 Z" fill="#8f8f8f"/><path d="M0.3 0.4 H2.2 V1.5 H0.3 Z" fill="#d8d8d8"/><path d="M2.6 1.2 H4.3 M0.8 2.4 H4.3 M0.8 3.4 H4.3 M0.8 4.4 H4.3" stroke="#e0e0e0" stroke-width="0.5"/></svg>
<div class="t" style="left:629.7px;top:56.55px;font-size:14.2px;color:#f2f2f2;">停用图层效果</div>
<div class="a" style="left:611.5px;top:62.58px;width:73.9px;height:6.35px;background:#595959;"></div>
<div class="a" style="left:612.6px;top:63.68px;width:4.2px;height:4.2px;background:#525252;border:0.45px solid #474747"></div>
<svg class="a" style="left:620.8px;top:63.18px" width="5" height="5.4" viewBox="0 0 5 5.4"><path d="M0.3 0.4 H4.7 V5 H0.3 Z" fill="#8f8f8f"/><path d="M0.3 0.4 H2.2 V1.5 H0.3 Z" fill="#d8d8d8"/><path d="M2.6 1.2 H4.3 M0.8 2.4 H4.3 M0.8 3.4 H4.3 M0.8 4.4 H4.3" stroke="#e0e0e0" stroke-width="0.5"/></svg>
<div class="t" style="left:629.7px;top:63.53px;font-size:14.2px;color:#f2f2f2;">填充图层</div>
<div class="a" style="left:611.5px;top:69.56px;width:73.9px;height:6.35px;background:#595959;"></div>
<div class="a" style="left:612.6px;top:70.66px;width:4.2px;height:4.2px;background:#525252;border:0.45px solid #474747"></div>
<svg class="a" style="left:620.8px;top:70.16px" width="5" height="5.4" viewBox="0 0 5 5.4"><path d="M0.3 0.4 H4.7 V5 H0.3 Z" fill="#8f8f8f"/><path d="M0.3 0.4 H2.2 V1.5 H0.3 Z" fill="#d8d8d8"/><path d="M2.6 1.2 H4.3 M0.8 2.4 H4.3 M0.8 3.4 H4.3 M0.8 4.4 H4.3" stroke="#e0e0e0" stroke-width="0.5"/></svg>
<div class="t" style="left:629.7px;top:70.51px;font-size:14.2px;color:#f2f2f2;">填充图层</div>
<div class="a" style="left:611.5px;top:76.53px;width:73.9px;height:6.35px;background:#595959;"></div>
<div class="a" style="left:612.6px;top:77.63px;width:4.2px;height:4.2px;background:#525252;border:0.45px solid #474747"></div>
<svg class="a" style="left:620.8px;top:77.13px" width="5" height="5.4" viewBox="0 0 5 5.4"><path d="M0.3 0.4 H4.7 V5 H0.3 Z" fill="#8f8f8f"/><path d="M0.3 0.4 H2.2 V1.5 H0.3 Z" fill="#d8d8d8"/><path d="M2.6 1.2 H4.3 M0.8 2.4 H4.3 M0.8 3.4 H4.3 M0.8 4.4 H4.3" stroke="#e0e0e0" stroke-width="0.5"/></svg>
<div class="t" style="left:629.7px;top:77.48px;font-size:14.2px;color:#f2f2f2;">填充图层</div>
<div class="a" style="left:611.5px;top:83.51px;width:73.9px;height:6.35px;background:#595959;"></div>
<div class="a" style="left:612.6px;top:84.61px;width:4.2px;height:4.2px;background:#525252;border:0.45px solid #474747"></div>
<svg class="a" style="left:620.8px;top:84.11px" width="5" height="5.4" viewBox="0 0 5 5.4"><path d="M0.3 0.4 H4.7 V5 H0.3 Z" fill="#8f8f8f"/><path d="M0.3 0.4 H2.2 V1.5 H0.3 Z" fill="#d8d8d8"/><path d="M2.6 1.2 H4.3 M0.8 2.4 H4.3 M0.8 3.4 H4.3 M0.8 4.4 H4.3" stroke="#e0e0e0" stroke-width="0.5"/></svg>
<div class="t" style="left:629.7px;top:84.46px;font-size:14.2px;color:#f2f2f2;">填充图层</div>
<div class="a" style="left:611.5px;top:90.48px;width:73.9px;height:6.35px;background:#595959;"></div>
<div class="a" style="left:612.6px;top:91.58px;width:4.2px;height:4.2px;background:#525252;border:0.45px solid #474747"></div>
<svg class="a" style="left:620.8px;top:91.08px" width="5" height="5.4" viewBox="0 0 5 5.4"><path d="M0.3 0.4 H4.7 V5 H0.3 Z" fill="#8f8f8f"/><path d="M0.3 0.4 H2.2 V1.5 H0.3 Z" fill="#d8d8d8"/><path d="M2.6 1.2 H4.3 M0.8 2.4 H4.3 M0.8 3.4 H4.3 M0.8 4.4 H4.3" stroke="#e0e0e0" stroke-width="0.5"/></svg>
<div class="t" style="left:629.7px;top:91.43px;font-size:14.2px;color:#f2f2f2;">启用图层效果</div>
<div class="a" style="left:611.5px;top:97.46px;width:73.9px;height:6.35px;background:#595959;"></div>
<div class="a" style="left:612.6px;top:98.56px;width:4.2px;height:4.2px;background:#525252;border:0.45px solid #474747"></div>
<div class="t" style="left:621.2px;top:97.51px;font-size:25.6px;color:#e8e8e8;font-family:Liberation Serif,serif;font-weight:400">T</div>
<div class="t" style="left:629.7px;top:98.41px;font-size:14.2px;color:#f2f2f2;">文字工具</div>
<div class="a" style="left:611.5px;top:104.44px;width:73.9px;height:6.35px;background:#595959;"></div>
<div class="a" style="left:612.6px;top:105.54px;width:4.2px;height:4.2px;background:#525252;border:0.45px solid #474747"></div>
<svg class="a" style="left:620.8px;top:105.04px" width="5" height="5.4" viewBox="0 0 5 5.4"><path d="M0.3 0.4 H4.7 V5 H0.3 Z" fill="#8f8f8f"/><path d="M0.3 0.4 H2.2 V1.5 H0.3 Z" fill="#d8d8d8"/><path d="M2.6 1.2 H4.3 M0.8 2.4 H4.3 M0.8 3.4 H4.3 M0.8 4.4 H4.3" stroke="#e0e0e0" stroke-width="0.5"/></svg>
<div class="t" style="left:629.7px;top:105.39px;font-size:14.2px;color:#f2f2f2;">停用图层效果</div>
<div class="a" style="left:611.5px;top:111.41px;width:73.9px;height:6.35px;background:#595959;"></div>
<div class="a" style="left:612.6px;top:112.51px;width:4.2px;height:4.2px;background:#525252;border:0.45px solid #474747"></div>
<svg class="a" style="left:620.8px;top:112.01px" width="5" height="5.4" viewBox="0 0 5 5.4"><path d="M0.3 0.4 H4.7 V5 H0.3 Z" fill="#8f8f8f"/><path d="M0.3 0.4 H2.2 V1.5 H0.3 Z" fill="#d8d8d8"/><path d="M2.6 1.2 H4.3 M0.8 2.4 H4.3 M0.8 3.4 H4.3 M0.8 4.4 H4.3" stroke="#e0e0e0" stroke-width="0.5"/></svg>
<div class="t" style="left:629.7px;top:112.36px;font-size:14.2px;color:#f2f2f2;">填入不透明度更改</div>
<div class="a" style="left:611.5px;top:118.39px;width:73.9px;height:6.35px;background:#595959;"></div>
<div class="a" style="left:612.6px;top:119.49px;width:4.2px;height:4.2px;background:#525252;border:0.45px solid #474747"></div>
<svg class="a" style="left:620.8px;top:118.99px" width="5" height="5.4" viewBox="0 0 5 5.4"><path d="M0.3 0.4 H4.7 V5 H0.3 Z" fill="#8f8f8f"/><path d="M0.3 0.4 H2.2 V1.5 H0.3 Z" fill="#d8d8d8"/><path d="M2.6 1.2 H4.3 M0.8 2.4 H4.3 M0.8 3.4 H4.3 M0.8 4.4 H4.3" stroke="#e0e0e0" stroke-width="0.5"/></svg>
<div class="t" style="left:629.7px;top:119.34px;font-size:14.2px;color:#f2f2f2;">停用图层效果</div>
<div class="a" style="left:611.5px;top:125.36px;width:73.9px;height:6.35px;background:#595959;"></div>
<div class="a" style="left:612.6px;top:126.46px;width:4.2px;height:4.2px;background:#525252;border:0.45px solid #474747"></div>
<svg class="a" style="left:620.8px;top:125.96px" width="5" height="5.4" viewBox="0 0 5 5.4"><path d="M0.3 0.4 H4.7 V5 H0.3 Z" fill="#8f8f8f"/><path d="M0.3 0.4 H2.2 V1.5 H0.3 Z" fill="#d8d8d8"/><path d="M2.6 1.2 H4.3 M0.8 2.4 H4.3 M0.8 3.4 H4.3 M0.8 4.4 H4.3" stroke="#e0e0e0" stroke-width="0.5"/></svg>
<div class="t" style="left:629.7px;top:126.31px;font-size:14.2px;color:#f2f2f2;">填入不透明度更改</div>
<div class="a" style="left:611.5px;top:132.34px;width:73.9px;height:6.35px;background:#595959;"></div>
<div class="a" style="left:612.6px;top:133.44px;width:4.2px;height:4.2px;background:#525252;border:0.45px solid #474747"></div>
<svg class="a" style="left:620.8px;top:132.94px" width="5" height="5.4" viewBox="0 0 5 5.4"><path d="M0.3 0.4 H4.7 V5 H0.3 Z" fill="#8f8f8f"/><path d="M0.3 0.4 H2.2 V1.5 H0.3 Z" fill="#d8d8d8"/><path d="M2.6 1.2 H4.3 M0.8 2.4 H4.3 M0.8 3.4 H4.3 M0.8 4.4 H4.3" stroke="#e0e0e0" stroke-width="0.5"/></svg>
<div class="t" style="left:629.7px;top:133.29px;font-size:14.2px;color:#f2f2f2;">启用图层效果</div>
<div class="a" style="left:611.5px;top:139.32px;width:73.9px;height:6.35px;background:#595959;"></div>
<div class="a" style="left:612.6px;top:140.42px;width:4.2px;height:4.2px;background:#525252;border:0.45px solid #474747"></div>
<svg class="a" style="left:620.8px;top:139.92px" width="5" height="5.4" viewBox="0 0 5 5.4"><path d="M0.3 0.4 H4.7 V5 H0.3 Z" fill="#8f8f8f"/><path d="M0.3 0.4 H2.2 V1.5 H0.3 Z" fill="#d8d8d8"/><path d="M2.6 1.2 H4.3 M0.8 2.4 H4.3 M0.8 3.4 H4.3 M0.8 4.4 H4.3" stroke="#e0e0e0" stroke-width="0.5"/></svg>
<div class="t" style="left:629.7px;top:140.27px;font-size:14.2px;color:#f2f2f2;">启用图层效果</div>
<div class="a" style="left:611.5px;top:146.29px;width:73.9px;height:6.35px;background:#595959;"></div>
<div class="a" style="left:612.6px;top:147.39px;width:4.2px;height:4.2px;background:#525252;border:0.45px solid #474747"></div>
<svg class="a" style="left:620.8px;top:146.89px" width="5" height="5.4" viewBox="0 0 5 5.4"><path d="M0.3 0.4 H4.7 V5 H0.3 Z" fill="#8f8f8f"/><path d="M0.3 0.4 H2.2 V1.5 H0.3 Z" fill="#d8d8d8"/><path d="M2.6 1.2 H4.3 M0.8 2.4 H4.3 M0.8 3.4 H4.3 M0.8 4.4 H4.3" stroke="#e0e0e0" stroke-width="0.5"/></svg>
<div class="t" style="left:629.7px;top:147.24px;font-size:14.2px;color:#f2f2f2;">停用图层效果</div>
<div class="a" style="left:611.5px;top:153.27px;width:73.9px;height:6.35px;background:#595959;"></div>
<div class="a" style="left:612.6px;top:154.37px;width:4.2px;height:4.2px;background:#525252;border:0.45px solid #474747"></div>
<svg class="a" style="left:620.8px;top:153.87px" width="5" height="5.4" viewBox="0 0 5 5.4"><path d="M0.3 0.4 H4.7 V5 H0.3 Z" fill="#8f8f8f"/><path d="M0.3 0.4 H2.2 V1.5 H0.3 Z" fill="#d8d8d8"/><path d="M2.6 1.2 H4.3 M0.8 2.4 H4.3 M0.8 3.4 H4.3 M0.8 4.4 H4.3" stroke="#e0e0e0" stroke-width="0.5"/></svg>
<div class="t" style="left:629.7px;top:154.22px;font-size:14.2px;color:#f2f2f2;">停用图层效果</div>
<div class="a" style="left:611.5px;top:160.24px;width:73.9px;height:6.35px;background:#595959;"></div>
<div class="a" style="left:612.6px;top:161.34px;width:4.2px;height:4.2px;background:#525252;border:0.45px solid #474747"></div>
<svg class="a" style="left:620.8px;top:160.84px" width="5" height="5.4" viewBox="0 0 5 5.4"><path d="M0.3 0.4 H4.7 V5 H0.3 Z" fill="#8f8f8f"/><path d="M0.3 0.4 H2.2 V1.5 H0.3 Z" fill="#d8d8d8"/><path d="M2.6 1.2 H4.3 M0.8 2.4 H4.3 M0.8 3.4 H4.3 M0.8 4.4 H4.3" stroke="#e0e0e0" stroke-width="0.5"/></svg>
<div class="t" style="left:629.7px;top:161.19px;font-size:14.2px;color:#f2f2f2;">启用图层效果</div>
<div class="a" style="left:611.5px;top:167.22px;width:73.9px;height:6.35px;background:#595959;"></div>
<div class="a" style="left:612.6px;top:168.32px;width:4.2px;height:4.2px;background:#525252;border:0.45px solid #474747"></div>
<svg class="a" style="left:620.8px;top:167.82px" width="5" height="5.4" viewBox="0 0 5 5.4"><path d="M0.3 0.4 H4.7 V5 H0.3 Z" fill="#8f8f8f"/><path d="M0.3 0.4 H2.2 V1.5 H0.3 Z" fill="#d8d8d8"/><path d="M2.6 1.2 H4.3 M0.8 2.4 H4.3 M0.8 3.4 H4.3 M0.8 4.4 H4.3" stroke="#e0e0e0" stroke-width="0.5"/></svg>
<div class="t" style="left:629.7px;top:168.17px;font-size:14.2px;color:#f2f2f2;">删除图层</div>
<div class="a" style="left:611.5px;top:174.2px;width:73.9px;height:6.35px;background:#595959;"></div>
<div class="a" style="left:612.6px;top:175.3px;width:4.2px;height:4.2px;background:#525252;border:0.45px solid #474747"></div>
<svg class="a" style="left:620.8px;top:174.8px" width="5" height="5.4" viewBox="0 0 5 5.4"><path d="M0.3 0.4 H4.7 V5 H0.3 Z" fill="#8f8f8f"/><path d="M0.3 0.4 H2.2 V1.5 H0.3 Z" fill="#d8d8d8"/><path d="M2.6 1.2 H4.3 M0.8 2.4 H4.3 M0.8 3.4 H4.3 M0.8 4.4 H4.3" stroke="#e0e0e0" stroke-width="0.5"/></svg>
<div class="t" style="left:629.7px;top:175.15px;font-size:14.2px;color:#f2f2f2;">启用图层效果</div>
<div class="a" style="left:611.5px;top:181.17px;width:73.9px;height:6.35px;background:#595959;"></div>
<div class="a" style="left:612.6px;top:182.27px;width:4.2px;height:4.2px;background:#525252;border:0.45px solid #474747"></div>
<svg class="a" style="left:620.8px;top:181.77px" width="5" height="5.4" viewBox="0 0 5 5.4"><path d="M0.3 0.4 H4.7 V5 H0.3 Z" fill="#8f8f8f"/><path d="M0.3 0.4 H2.2 V1.5 H0.3 Z" fill="#d8d8d8"/><path d="M2.6 1.2 H4.3 M0.8 2.4 H4.3 M0.8 3.4 H4.3 M0.8 4.4 H4.3" stroke="#e0e0e0" stroke-width="0.5"/></svg>
<div class="t" style="left:629.7px;top:182.12px;font-size:14.2px;color:#f2f2f2;">启用图层效果</div>
<div class="a" style="left:611.5px;top:188.15px;width:73.9px;height:6.35px;background:#595959;"></div>
<div class="a" style="left:612.6px;top:189.25px;width:4.2px;height:4.2px;background:#525252;border:0.45px solid #474747"></div>
<svg class="a" style="left:620.8px;top:188.75px" width="5" height="5.4" viewBox="0 0 5 5.4"><path d="M0.3 0.4 H4.7 V5 H0.3 Z" fill="#8f8f8f"/><path d="M0.3 0.4 H2.2 V1.5 H0.3 Z" fill="#d8d8d8"/><path d="M2.6 1.2 H4.3 M0.8 2.4 H4.3 M0.8 3.4 H4.3 M0.8 4.4 H4.3" stroke="#e0e0e0" stroke-width="0.5"/></svg>
<div class="t" style="left:629.7px;top:189.1px;font-size:14.2px;color:#f2f2f2;">停用图层效果</div>
<div class="a" style="left:611.5px;top:195.12px;width:73.9px;height:6.35px;background:#595959;"></div>
<div class="a" style="left:612.6px;top:196.22px;width:4.2px;height:4.2px;background:#525252;border:0.45px solid #474747"></div>
<svg class="a" style="left:620.8px;top:195.72px" width="5" height="5.4" viewBox="0 0 5 5.4"><path d="M0.3 0.4 H4.7 V5 H0.3 Z" fill="#8f8f8f"/><path d="M0.3 0.4 H2.2 V1.5 H0.3 Z" fill="#d8d8d8"/><path d="M2.6 1.2 H4.3 M0.8 2.4 H4.3 M0.8 3.4 H4.3 M0.8 4.4 H4.3" stroke="#e0e0e0" stroke-width="0.5"/></svg>
<div class="t" style="left:629.7px;top:196.07px;font-size:14.2px;color:#f2f2f2;">停用图层效果</div>
<div class="a" style="left:611.5px;top:202.1px;width:73.9px;height:6.35px;background:#595959;"></div>
<div class="a" style="left:612.6px;top:203.2px;width:4.2px;height:4.2px;background:#525252;border:0.45px solid #474747"></div>
<svg class="a" style="left:620.8px;top:202.7px" width="5" height="5.4" viewBox="0 0 5 5.4"><path d="M0.3 0.4 H4.7 V5 H0.3 Z" fill="#8f8f8f"/><path d="M0.3 0.4 H2.2 V1.5 H0.3 Z" fill="#d8d8d8"/><path d="M2.6 1.2 H4.3 M0.8 2.4 H4.3 M0.8 3.4 H4.3 M0.8 4.4 H4.3" stroke="#e0e0e0" stroke-width="0.5"/></svg>
<div class="t" style="left:629.7px;top:203.05px;font-size:14.2px;color:#f2f2f2;">启用图层效果</div>
<div class="a" style="left:611.5px;top:209.08px;width:73.9px;height:6.35px;background:#595959;"></div>
<div class="a" style="left:612.6px;top:210.18px;width:4.2px;height:4.2px;background:#525252;border:0.45px solid #474747"></div>
<svg class="a" style="left:620.8px;top:209.68px" width="5" height="5.4" viewBox="0 0 5 5.4"><path d="M0.3 0.4 H4.7 V5 H0.3 Z" fill="#8f8f8f"/><path d="M0.3 0.4 H2.2 V1.5 H0.3 Z" fill="#d8d8d8"/><path d="M2.6 1.2 H4.3 M0.8 2.4 H4.3 M0.8 3.4 H4.3 M0.8 4.4 H4.3" stroke="#e0e0e0" stroke-width="0.5"/></svg>
<div class="t" style="left:629.7px;top:210.03px;font-size:14.2px;color:#f2f2f2;">启用图层效果</div>
<div class="a" style="left:611.5px;top:216.05px;width:73.9px;height:6.35px;background:#595959;"></div>
<div class="a" style="left:612.6px;top:217.15px;width:4.2px;height:4.2px;background:#525252;border:0.45px solid #474747"></div>
<svg class="a" style="left:620.8px;top:216.65px" width="5" height="5.4" viewBox="0 0 5 5.4"><path d="M0.3 0.4 H4.7 V5 H0.3 Z" fill="#8f8f8f"/><path d="M0.3 0.4 H2.2 V1.5 H0.3 Z" fill="#d8d8d8"/><path d="M2.6 1.2 H4.3 M0.8 2.4 H4.3 M0.8 3.4 H4.3 M0.8 4.4 H4.3" stroke="#e0e0e0" stroke-width="0.5"/></svg>
<div class="t" style="left:629.7px;top:217.0px;font-size:14.2px;color:#f2f2f2;">停用图层效果</div>
<div class="a" style="left:611.5px;top:223.03px;width:73.9px;height:6.35px;background:#595959;"></div>
<div class="a" style="left:612.6px;top:224.13px;width:4.2px;height:4.2px;background:#525252;border:0.45px solid #474747"></div>
<svg class="a" style="left:620.8px;top:223.63px" width="5" height="5.4" viewBox="0 0 5 5.4"><path d="M0.3 0.4 H4.7 V5 H0.3 Z" fill="#8f8f8f"/><path d="M0.3 0.4 H2.2 V1.5 H0.3 Z" fill="#d8d8d8"/><path d="M2.6 1.2 H4.3 M0.8 2.4 H4.3 M0.8 3.4 H4.3 M0.8 4.4 H4.3" stroke="#e0e0e0" stroke-width="0.5"/></svg>
<div class="t" style="left:629.7px;top:223.98px;font-size:14.2px;color:#f2f2f2;">停用图层效果</div>
<div class="a" style="left:611.5px;top:230.0px;width:73.9px;height:6.35px;background:#595959;"></div>
<div class="a" style="left:612.6px;top:231.1px;width:4.2px;height:4.2px;background:#525252;border:0.45px solid #474747"></div>
<svg class="a" style="left:620.8px;top:230.6px" width="5" height="5.4" viewBox="0 0 5 5.4"><path d="M0.3 0.4 H4.7 V5 H0.3 Z" fill="#8f8f8f"/><path d="M0.3 0.4 H2.2 V1.5 H0.3 Z" fill="#d8d8d8"/><path d="M2.6 1.2 H4.3 M0.8 2.4 H4.3 M0.8 3.4 H4.3 M0.8 4.4 H4.3" stroke="#e0e0e0" stroke-width="0.5"/></svg>
<div class="t" style="left:629.7px;top:230.95px;font-size:14.2px;color:#f2f2f2;">停用图层效果</div>
<div class="a" style="left:611.5px;top:236.98px;width:73.9px;height:6.35px;background:#595959;"></div>
<div class="a" style="left:612.6px;top:238.08px;width:4.2px;height:4.2px;background:#525252;border:0.45px solid #474747"></div>
<svg class="a" style="left:620.8px;top:237.58px" width="5" height="5.4" viewBox="0 0 5 5.4"><path d="M0.3 0.4 H4.7 V5 H0.3 Z" fill="#8f8f8f"/><path d="M0.3 0.4 H2.2 V1.5 H0.3 Z" fill="#d8d8d8"/><path d="M2.6 1.2 H4.3 M0.8 2.4 H4.3 M0.8 3.4 H4.3 M0.8 4.4 H4.3" stroke="#e0e0e0" stroke-width="0.5"/></svg>
<div class="t" style="left:629.7px;top:237.93px;font-size:14.2px;color:#f2f2f2;">删除图层</div>
<div class="a" style="left:611.5px;top:243.96px;width:73.9px;height:6.35px;background:#595959;"></div>
<div class="a" style="left:612.6px;top:245.06px;width:4.2px;height:4.2px;background:#525252;border:0.45px solid #474747"></div>
<svg class="a" style="left:620.8px;top:244.56px" width="5" height="5.4" viewBox="0 0 5 5.4"><path d="M0.3 0.4 H4.7 V5 H0.3 Z" fill="#8f8f8f"/><path d="M0.3 0.4 H2.2 V1.5 H0.3 Z" fill="#d8d8d8"/><path d="M2.6 1.2 H4.3 M0.8 2.4 H4.3 M0.8 3.4 H4.3 M0.8 4.4 H4.3" stroke="#e0e0e0" stroke-width="0.5"/></svg>
<div class="t" style="left:629.7px;top:244.91px;font-size:14.2px;color:#f2f2f2;">自由变换</div>
<div class="a" style="left:611.5px;top:250.93px;width:73.9px;height:6.35px;background:#595959;"></div>
<div class="a" style="left:612.6px;top:252.03px;width:4.2px;height:4.2px;background:#525252;border:0.45px solid #474747"></div>
<svg class="a" style="left:620.8px;top:251.53px" width="5" height="5.4" viewBox="0 0 5 5.4"><path d="M0.3 0.4 H4.7 V5 H0.3 Z" fill="#8f8f8f"/><path d="M0.3 0.4 H2.2 V1.5 H0.3 Z" fill="#d8d8d8"/><path d="M2.6 1.2 H4.3 M0.8 2.4 H4.3 M0.8 3.4 H4.3 M0.8 4.4 H4.3" stroke="#e0e0e0" stroke-width="0.5"/></svg>
<div class="t" style="left:629.7px;top:251.88px;font-size:14.2px;color:#f2f2f2;">自由变换</div>
<div class="a" style="left:611.5px;top:257.91px;width:73.9px;height:6.35px;background:#5b6a82;"></div>
<div class="a" style="left:612.6px;top:259.01px;width:4.2px;height:4.2px;background:#525252;border:0.45px solid #474747"></div>
<svg class="a" style="left:620.8px;top:258.51px" width="5" height="5.4" viewBox="0 0 5 5.4"><path d="M0.3 0.4 H4.7 V5 H0.3 Z" fill="#8f8f8f"/><path d="M0.3 0.4 H2.2 V1.5 H0.3 Z" fill="#d8d8d8"/><path d="M2.6 1.2 H4.3 M0.8 2.4 H4.3 M0.8 3.4 H4.3 M0.8 4.4 H4.3" stroke="#e0e0e0" stroke-width="0.5"/></svg>
<div class="t" style="left:629.7px;top:258.86px;font-size:14.2px;color:#f2f2f2;">启用图层效果</div>
<div class="a" style="left:685.4px;top:27.7px;width:4.4px;height:236px;background:#3f3f3f;"></div>
<div class="a" style="left:686px;top:56px;width:3.7px;height:203.5px;background:#7a7a7a;"></div>
<div class="t" style="left:686px;top:28.55px;font-size:12.8px;color:#ccc;">▴</div>
<div class="t" style="left:686px;top:260.05px;font-size:12.8px;color:#ccc;">▾</div>
<div class="a" style="left:611.3px;top:263.9px;width:78.7px;height:6.6px;background:#535353;"></div>
<svg class="a" style="left:658px;top:264.4px" width="26" height="6" viewBox="658 264.4 26 6" fill="#d8d8d8"><path d="M659.6 267.6 L661.7 265.6 L663.8 267.6 L663.2 267.6 L663.2 269.4 L660.2 269.4 L660.2 267.6 Z"/><path d="M669 266 h3.8 v3.4 h-3.8 z M669.8 266.9 v1.6 h2.2 v-1.6 z" fill-rule="evenodd"/><circle cx="670.2" cy="266" r="0.8"/><path d="M678.4 266.6 h2.4 v2.9 h-2.4 z M677.9 265.7 h3.4 v0.5 h-3.4 z M679 265.2 h1.2 v0.5 h-1.2z"/></svg>
<div class="a" style="left:611.3px;top:270.4px;width:78.7px;height:0.5px;background:#3a3a3a;"></div>
<div class="a" style="left:611.3px;top:270.9px;width:78.7px;height:4.9px;background:#3d3d3d;"></div>
<div class="a" style="left:611.8px;top:271.1px;width:11.2px;height:4.7px;background:#535353;"></div>
<div class="t" style="left:613.4px;top:272.05px;font-size:14.0px;color:#e0e0e0;">字符</div>
<div class="t" style="left:685.3px;top:272.15px;font-size:12px;color:#ccc;">▾≡</div>
<div class="a" style="left:614.4px;top:278px;width:26.2px;height:5.5px;background:#3a3a3a;border:0.4px solid #2b2b2b"></div>
<div class="t" style="left:615.5px;top:279.45px;font-size:13.6px;color:#f0f0f0;">Arial</div>
<div class="a" style="left:641px;top:278px;width:6px;height:5.5px;background:#707070;border:0.4px solid #8a8a8a;border-radius:0.5px"></div>
<div class="t" style="left:642.95px;top:279.4px;font-size:12px;color:#e8e8e8;">▾</div>
<div class="a" style="left:650px;top:278px;width:16.7px;height:5.5px;background:#3a3a3a;border:0.4px solid #2b2b2b"></div>
<div class="t" style="left:651.1px;top:279.45px;font-size:13.6px;color:#f0f0f0;">Regular</div>
<div class="a" style="left:667px;top:278px;width:6px;height:5.5px;background:#707070;border:0.4px solid #8a8a8a;border-radius:0.5px"></div>
<div class="t" style="left:668.95px;top:279.4px;font-size:12px;color:#e8e8e8;">▾</div>
<div class="t" style="left:613px;top:288.15px;font-size:14.4px;color:#ddd;">тT</div>
<div class="a" style="left:618.5px;top:287.3px;width:21.5px;height:5.7px;background:#3a3a3a;border:0.4px solid #2b2b2b"></div>
<div class="t" style="left:619.6px;top:288.85px;font-size:13.6px;color:#f0f0f0;">24点</div>
<div class="a" style="left:641px;top:287.3px;width:5px;height:5.7px;background:#707070;border:0.4px solid #8a8a8a;border-radius:0.5px"></div>
<div class="t" style="left:642.45px;top:288.8px;font-size:12px;color:#e8e8e8;">▾</div>
<div class="t" style="left:649.2px;top:288.15px;font-size:14.4px;color:#ddd;">ᴬA</div>
<div class="a" style="left:654.6px;top:287.3px;width:18.3px;height:5.7px;background:#3a3a3a;border:0.4px solid #2b2b2b"></div>
<div class="t" style="left:655.7px;top:288.85px;font-size:13.6px;color:#f0f0f0;">(自动)</div>
<div class="a" style="left:673.8px;top:287.3px;width:4.4px;height:5.7px;background:#707070;border:0.4px solid #8a8a8a;border-radius:0.5px"></div>
<div class="t" style="left:674.95px;top:288.8px;font-size:12px;color:#e8e8e8;">▾</div>
<div class="t" style="left:612.6px;top:296.15px;font-size:12px;color:#ddd;">V/A</div>
<div class="a" style="left:618.5px;top:295px;width:21.5px;height:5.3px;background:#3a3a3a;border:0.4px solid #2b2b2b"></div>
<div class="t" style="left:619.6px;top:296.35px;font-size:13.6px;color:#f0f0f0;">0</div>
<div class="a" style="left:641px;top:295px;width:5px;height:5.3px;background:#707070;border:0.4px solid #8a8a8a;border-radius:0.5px"></div>
<div class="t" style="left:642.45px;top:296.3px;font-size:12px;color:#e8e8e8;">▾</div>
<div class="t" style="left:648.6px;top:296.15px;font-size:13.6px;color:#ddd;">VA</div>
<div class="a" style="left:648.4px;top:299px;width:4.6px;height:0.5px;background:#ddd;"></div>
<div class="a" style="left:654.6px;top:295px;width:18.3px;height:5.3px;background:#3a3a3a;border:0.4px solid #2b2b2b"></div>
<div class="t" style="left:655.7px;top:296.35px;font-size:13.6px;color:#f0f0f0;">0</div>
<div class="a" style="left:673.8px;top:295px;width:4.4px;height:5.3px;background:#707070;border:0.4px solid #8a8a8a;border-radius:0.5px"></div>
<div class="t" style="left:674.95px;top:296.3px;font-size:12px;color:#e8e8e8;">▾</div>
<div class="t" style="left:613.3px;top:305.15px;font-size:14.0px;color:#ddd;">あ</div>
<div class="a" style="left:618.9px;top:304.1px;width:18.1px;height:5.4px;background:#3a3a3a;border:0.4px solid #2b2b2b"></div>
<div class="t" style="left:620.0px;top:305.5px;font-size:13.6px;color:#f0f0f0;">0%</div>
<div class="a" style="left:637.6px;top:304.1px;width:5.1px;height:5.4px;background:#707070;border:0.4px solid #8a8a8a;border-radius:0.5px"></div>
<div class="t" style="left:639.1px;top:305.45px;font-size:12px;color:#e8e8e8;">▾</div>
<div class="t" style="left:613px;top:314.35px;font-size:16px;color:#ddd;font-family:Liberation Serif,serif">IT</div>
<div class="a" style="left:618.9px;top:313.4px;width:15.9px;height:5.1px;background:#3a3a3a;border:0.4px solid #2b2b2b"></div>
<div class="t" style="left:620.0px;top:314.65px;font-size:13.6px;color:#f0f0f0;">100%</div>
<div class="t" style="left:655.6px;top:314.35px;font-size:16px;color:#ddd;font-family:Liberation Serif,serif;transform:scale(.36,.25)">T</div>
<div class="a" style="left:661.9px;top:313.4px;width:16.1px;height:5.1px;background:#3a3a3a;border:0.4px solid #2b2b2b"></div>
<div class="t" style="left:663.0px;top:314.65px;font-size:13.6px;color:#f0f0f0;">100%</div>
<div class="t" style="left:612.6px;top:320.95px;font-size:14.4px;color:#ddd;">Aª</div>
<div class="a" style="left:618.9px;top:319.7px;width:15.9px;height:5.2px;background:#3a3a3a;border:0.4px solid #2b2b2b"></div>
<div class="t" style="left:620.0px;top:321.0px;font-size:13.6px;color:#f0f0f0;">0点</div>
<div class="t" style="left:650.8px;top:320.95px;font-size:14.0px;color:#f0f0f0;">颜色:</div>
<div class="a" style="left:662.3px;top:319.7px;width:15.7px;height:5.2px;background:#ff0000;border:0.3px solid #2b2b2b"></div>
<div class="a" style="left:612px;top:327.1px;width:69.5px;height:0.4px;background:#444;"></div>
<div class="t" style="left:615.5px;top:329.95px;font-size:18.4px;color:#cfcfcf;font-family:Liberation Serif,serif;font-weight:700;width:40px;text-align:center">T</div>
<div class="t" style="left:622.83px;top:329.95px;font-size:18.4px;color:#cfcfcf;font-family:Liberation Serif,serif;font-weight:700;width:40px;text-align:center;font-style:italic">T</div>
<div class="t" style="left:630.16px;top:329.95px;font-size:18.4px;color:#cfcfcf;font-family:Liberation Serif,serif;font-weight:700;width:40px;text-align:center">TT</div>
<div class="t" style="left:637.49px;top:329.95px;font-size:18.4px;color:#cfcfcf;font-family:Liberation Serif,serif;font-weight:700;width:40px;text-align:center">Tт</div>
<div class="t" style="left:644.82px;top:329.95px;font-size:18.4px;color:#cfcfcf;font-family:Liberation Serif,serif;font-weight:700;width:40px;text-align:center">T¹</div>
<div class="t" style="left:652.15px;top:329.95px;font-size:18.4px;color:#cfcfcf;font-family:Liberation Serif,serif;font-weight:700;width:40px;text-align:center">T₁</div>
<div class="t" style="left:659.48px;top:329.95px;font-size:18.4px;color:#cfcfcf;font-family:Liberation Serif,serif;font-weight:700;width:40px;text-align:center;text-decoration:underline">T</div>
<div class="t" style="left:666.81px;top:329.95px;font-size:18.4px;color:#cfcfcf;font-family:Liberation Serif,serif;font-weight:700;width:40px;text-align:center;text-decoration:line-through">T</div>
<div class="a" style="left:618px;top:338px;width:6px;height:7px;background:#3a3a3a;border:0.4px solid #2b2b2b"></div>
<div class="t" style="left:615.5px;top:339.75px;font-size:17.6px;color:#eee;font-family:Liberation Serif,serif;font-style:italic;width:40px;text-align:center">fi</div>
<div class="t" style="left:622.83px;top:339.75px;font-size:17.6px;color:#8a8a8a;font-family:Liberation Serif,serif;font-style:italic;width:40px;text-align:center">ơ</div>
<div class="t" style="left:630.16px;top:339.75px;font-size:17.6px;color:#8a8a8a;font-family:Liberation Serif,serif;font-style:italic;width:40px;text-align:center">st</div>
<div class="t" style="left:637.49px;top:339.75px;font-size:17.6px;color:#8a8a8a;font-family:Liberation Serif,serif;font-style:italic;width:40px;text-align:center">A</div>
<div class="t" style="left:644.82px;top:339.75px;font-size:17.6px;color:#8a8a8a;font-family:Liberation Serif,serif;font-style:italic;width:40px;text-align:center">ad</div>
<div class="t" style="left:652.15px;top:339.75px;font-size:17.6px;color:#8a8a8a;font-family:Liberation Serif,serif;font-style:italic;width:40px;text-align:center">T</div>
<div class="t" style="left:659.48px;top:339.75px;font-size:17.6px;color:#8a8a8a;font-family:Liberation Serif,serif;font-style:italic;width:40px;text-align:center">1st</div>
<div class="t" style="left:666.81px;top:339.75px;font-size:17.6px;color:#8a8a8a;font-family:Liberation Serif,serif;font-style:italic;width:40px;text-align:center">½</div>
<div class="a" style="left:614.1px;top:348.2px;width:39.9px;height:5.5px;background:#6b6b6b;border:0.4px solid #7c7c7c;border-radius:0.5px"></div>
<div class="t" style="left:650.6px;top:349.6px;font-size:12px;color:#e8e8e8;">▾</div>
<div class="t" style="left:615.2px;top:349.65px;font-size:13.6px;color:#f0f0f0;">美国英语</div>
<div class="t" style="left:656.5px;top:349.75px;font-size:13.6px;color:#ddd;">aa</div>
<div class="a" style="left:663.2px;top:348.2px;width:15.7px;height:5.5px;background:#6b6b6b;border:0.4px solid #7c7c7c;border-radius:0.5px"></div>
<div class="t" style="left:675.5px;top:349.6px;font-size:12px;color:#e8e8e8;">▾</div>
<div class="t" style="left:664.3000000000001px;top:349.65px;font-size:13.6px;color:#f0f0f0;">锐利</div>
<div class="a" style="left:611.3px;top:356.5px;width:78.7px;height:0.5px;background:#3a3a3a;"></div>
<div class="a" style="left:611.3px;top:357px;width:78.7px;height:4.6px;background:#3d3d3d;"></div>
<div class="a" style="left:611.8px;top:357.2px;width:11.2px;height:4.4px;background:#535353;"></div>
<div class="t" style="left:613.4px;top:358.05px;font-size:14.0px;color:#e0e0e0;">段落</div>
<div class="t" style="left:685.3px;top:358.15px;font-size:12px;color:#ccc;">▾≡</div>
<div class="a" style="left:626px;top:363.6px;width:5.6px;height:6.4px;background:#3a3a3a;border:0.4px solid #2b2b2b"></div>
<div class="a" style="left:619.1px;top:364.9px;width:4.4px;height:4.2px;background:transparent;background:repeating-linear-gradient(#c4c4c4 0,#c4c4c4 0.65px,transparent 0.65px,transparent 1.2px)"></div>
<div class="a" style="left:626.6px;top:364.9px;width:4.4px;height:4.2px;background:transparent;background:repeating-linear-gradient(#c4c4c4 0,#c4c4c4 0.65px,transparent 0.65px,transparent 1.2px)"></div>
<div class="a" style="left:633.8px;top:364.9px;width:4.4px;height:4.2px;background:transparent;background:repeating-linear-gradient(#c4c4c4 0,#c4c4c4 0.65px,transparent 0.65px,transparent 1.2px)"></div>
<div class="a" style="left:643.7px;top:364.9px;width:4.4px;height:4.2px;background:transparent;background:repeating-linear-gradient(#c4c4c4 0,#c4c4c4 0.65px,transparent 0.65px,transparent 1.2px)"></div>
<div class="a" style="left:651.4px;top:364.9px;width:4.4px;height:4.2px;background:transparent;background:repeating-linear-gradient(#c4c4c4 0,#c4c4c4 0.65px,transparent 0.65px,transparent 1.2px)"></div>
<div class="a" style="left:658.7px;top:364.9px;width:4.4px;height:4.2px;background:transparent;background:repeating-linear-gradient(#c4c4c4 0,#c4c4c4 0.65px,transparent 0.65px,transparent 1.2px)"></div>
<div class="a" style="left:669.0px;top:364.9px;width:4.4px;height:4.2px;background:transparent;background:repeating-linear-gradient(#c4c4c4 0,#c4c4c4 0.65px,transparent 0.65px,transparent 1.2px)"></div>
<div class="t" style="left:613.8px;top:375.75px;font-size:12.8px;color:#ddd;">+≡</div>
<div class="a" style="left:620.7px;top:374.2px;width:16.3px;height:5.5px;background:#3a3a3a;border:0.4px solid #2b2b2b"></div>
<div class="t" style="left:621.8000000000001px;top:375.65px;font-size:13.6px;color:#f0f0f0;">0点</div>
<div class="t" style="left:648.2px;top:375.75px;font-size:12.8px;color:#ddd;">≡+</div>
<div class="a" style="left:655.2px;top:374.2px;width:16.3px;height:5.5px;background:#3a3a3a;border:0.4px solid #2b2b2b"></div>
<div class="t" style="left:656.3000000000001px;top:375.65px;font-size:13.6px;color:#f0f0f0;">0点</div>
<div class="t" style="left:613.8px;top:383.35px;font-size:12.8px;color:#ddd;">*≡</div>
<div class="a" style="left:620.7px;top:381.9px;width:16.3px;height:5.3px;background:#3a3a3a;border:0.4px solid #2b2b2b"></div>
<div class="t" style="left:621.8000000000001px;top:383.25px;font-size:13.6px;color:#f0f0f0;">0点</div>
<div class="a" style="left:612px;top:388.6px;width:69.5px;height:0.4px;background:#444;"></div>
<div class="t" style="left:613.8px;top:391.95px;font-size:12.8px;color:#ddd;">*≡</div>
<div class="a" style="left:620.7px;top:390.3px;width:16.3px;height:5.7px;background:#3a3a3a;border:0.4px solid #2b2b2b"></div>
<div class="t" style="left:621.8000000000001px;top:391.85px;font-size:13.6px;color:#f0f0f0;">0点</div>
<div class="t" style="left:648.2px;top:391.95px;font-size:12.8px;color:#ddd;">.≡</div>
<div class="a" style="left:655.2px;top:390.3px;width:16.3px;height:5.7px;background:#3a3a3a;border:0.4px solid #2b2b2b"></div>
<div class="t" style="left:656.3000000000001px;top:391.85px;font-size:13.6px;color:#f0f0f0;">0点</div>
<div class="t" style="left:615.8px;top:400.75px;font-size:14.0px;color:#f0f0f0;">避头尾法则设置:</div>
<div class="a" style="left:645.1px;top:399.3px;width:33.2px;height:5.5px;background:#6b6b6b;border:0.4px solid #7c7c7c;border-radius:0.5px"></div>
<div class="t" style="left:674.9px;top:400.7px;font-size:12px;color:#e8e8e8;">▾</div>
<div class="t" style="left:646.2px;top:400.75px;font-size:13.6px;color:#f0f0f0;">无</div>
<div class="t" style="left:619.2px;top:408.55px;font-size:14.0px;color:#f0f0f0;">间距组合设置:</div>
<div class="a" style="left:645.1px;top:407.1px;width:33.2px;height:5.7px;background:#6b6b6b;border:0.4px solid #7c7c7c;border-radius:0.5px"></div>
<div class="t" style="left:674.9px;top:408.6px;font-size:12px;color:#e8e8e8;">▾</div>
<div class="t" style="left:646.2px;top:408.65px;font-size:13.6px;color:#f0f0f0;">无</div>
<div class="a" style="left:612px;top:415.4px;width:69.5px;height:0.4px;background:#444;"></div>
<div class="a" style="left:615.3px;top:417.7px;width:3.5px;height:3.4px;background:#5e5e5e;border:0.4px solid #8a8a8a"></div>
<div class="t" style="left:621px;top:418.15px;font-size:14.0px;color:#f0f0f0;">连字</div>
<div class="a" style="left:606px;top:41px;width:11px;height:15.6px;background:#535353;border:0.5px solid #2e2e2e"></div>
<div class="a" style="left:606px;top:41px;width:11px;height:3px;background:#3a3a3a;"></div>
<div class="t" style="left:607px;top:41.15px;font-size:12px;color:#ccc;">«</div>
<div class="t" style="left:613px;top:40.95px;font-size:12px;color:#ccc;">×</div>
<div class="a" style="left:608px;top:46.2px;width:7px;height:0.5px;background:#3c3c3c;"></div>
<div class="a" style="left:609.6px;top:49.4px;width:1.6px;height:0.8px;background:#ddd;"></div>
<div class="a" style="left:612px;top:49.4px;width:1.6px;height:0.8px;background:#ddd;"></div>
<div class="a" style="left:609.6px;top:51.2px;width:1.6px;height:0.8px;background:#ddd;"></div>
<div class="a" style="left:612px;top:51.2px;width:1.6px;height:0.8px;background:#ddd;"></div>
<div class="a" style="left:609.4px;top:53.2px;width:4.6px;height:0.9px;background:#e4e4e4;"></div>
<div class="a" style="left:690.6px;top:22.9px;width:11.8px;height:62.6px;background:#535353;"></div>
<div class="a" style="left:693.8px;top:24.4px;width:5.6px;height:0.5px;background:#3c3c3c;"></div>
<div class="a" style="left:693.8px;top:45.2px;width:5.6px;height:0.5px;background:#3c3c3c;"></div>
<div class="a" style="left:693.8px;top:66px;width:5.6px;height:0.5px;background:#3c3c3c;"></div>
<div class="a" style="left:690.6px;top:43.4px;width:11.8px;height:0.6px;background:#3a3a3a;"></div>
<div class="a" style="left:690.6px;top:64.6px;width:11.8px;height:0.6px;background:#3a3a3a;"></div>
<svg class="a" style="left:691px;top:26px" width="11" height="58" viewBox="691 26 11 58" fill="#d4d4d4"><path d="M696.6 27.6 L699 28.8 V31.4 L696.6 32.6 L694.2 31.4 V28.8 Z" fill="#8e8e8e"/><path d="M694 40.2 L695 38.8 L696.2 39 L697 37 L698 38.6 L699.2 39.2 V40.2 Z"/><path d="M695.6 50.6 H697.8 V53.4 H695.6 Z M696.7 48.6 V50.2 M695.4 49.2 L696 50 M698 49.2 L697.4 50" stroke="#d4d4d4" stroke-width="0.5"/><path d="M694.4 57.6 H699 V58.6 H694.4 Z M694.4 60 H697.6 V60.8 H694.4 Z M698.2 59.4 H699.2 V61.6 H698.2Z"/><path d="M694.6 68.8 H698.8 V73.8 H694.6 Z" fill="#bdbdbd"/><path d="M695.4 70 H698 M695.4 71.3 H698 M695.4 72.6 H697" stroke="#555" stroke-width="0.45"/><path d="M694.6 77.2 H698.8 V81 L697.6 82.3 H694.6 Z" fill="#bdbdbd"/><path d="M695.4 78.4 H698 M695.4 79.7 H698" stroke="#555" stroke-width="0.45"/></svg>
<div class="a" style="left:690.6px;top:85.5px;width:14.4px;height:338.5px;background:#4f4f4f;"></div>
<div class="a" style="left:690.6px;top:85.3px;width:11.8px;height:0.5px;background:#3a3a3a;"></div>
<div class="a" style="left:702.4px;top:22.9px;width:2.6px;height:401.1px;background:#3c3c3c;"></div>
<div class="a" style="left:702.6px;top:28.5px;width:2.4px;height:6.1px;background:#e8000f;"></div>
<div class="a" style="left:702.6px;top:34.9px;width:2.4px;height:6.0px;background:#f2f2f2;"></div>
<div class="a" style="left:702.6px;top:41.2px;width:2.4px;height:6.0px;background:#a0a0a0;"></div>
<div class="a" style="left:702.6px;top:47.5px;width:2.4px;height:5.8px;background:#f7ab6c;"></div>
<div class="a" style="left:702.6px;top:53.6px;width:2.4px;height:5.6px;background:#b064d2;"></div>
<div class="a" style="left:702.6px;top:59.5px;width:2.4px;height:4.8px;background:#10a5a0;"></div>
<div class="a" style="left:702.6px;top:64.6px;width:2.4px;height:5.7px;background:#f29100;"></div>
<div class="a" style="left:702.6px;top:70.6px;width:2.4px;height:5.9px;background:#b410a4;"></div>
<div class="a" style="left:702.6px;top:76.8px;width:2.4px;height:5.9px;background:#1290c2;"></div>
<div class="a" style="left:702.6px;top:83px;width:2.4px;height:5.9px;background:#a3a012;"></div>
<div class="a" style="left:702.6px;top:89.2px;width:2.4px;height:5.5px;background:#b01262;"></div>
<div class="a" style="left:702.6px;top:95px;width:2.4px;height:5.7px;background:#a35412;"></div>
<svg class="a" style="left:540px;top:396px;will-change:transform" width="56" height="28" viewBox="540 396 56 28">
<rect x="544" y="398.5" width="24" height="14" rx="6" fill="#f9bccb"/>
<rect x="543" y="402" width="49" height="26" rx="7" fill="#ffffff" stroke="#a86a50" stroke-width="0.5"/>
<text x="547" y="411.5" font-size="6.3" font-weight="900" fill="#f0668c" font-family="Liberation Sans, Noto Sans CJK SC, sans-serif">中</text>
<text x="557.5" y="411.5" font-size="6.3" font-weight="900" fill="#f0668c" font-family="Liberation Sans, Noto Sans CJK SC, sans-serif">简</text>
<text x="547" y="421" font-size="6.3" font-weight="900" fill="#f0668c" font-family="Liberation Sans, Noto Sans CJK SC, sans-serif">半</text>
<text x="557.5" y="421.3" font-size="7" fill="#f0668c" font-family="DejaVu Sans, sans-serif">♥</text>
<circle cx="572.2" cy="409.4" r="3.1" fill="#7a3a1c"/><circle cx="584.5" cy="409.4" r="3.1" fill="#7a3a1c"/>
<circle cx="573.3" cy="410" r="0.8" fill="#fff"/><circle cx="585.5" cy="410" r="0.8" fill="#fff"/>
<ellipse cx="569.6" cy="414.2" rx="2" ry="1.1" fill="#f58fa8" transform="rotate(20 569.6 414.2)"/><ellipse cx="587.8" cy="414.2" rx="2" ry="1.1" fill="#f58fa8" transform="rotate(-20 587.8 414.2)"/>
<path d="M577.6 413.5 L579 413.5 L578.5 419 Z" fill="#f3a0b0"/>
</svg>
</body></html>
